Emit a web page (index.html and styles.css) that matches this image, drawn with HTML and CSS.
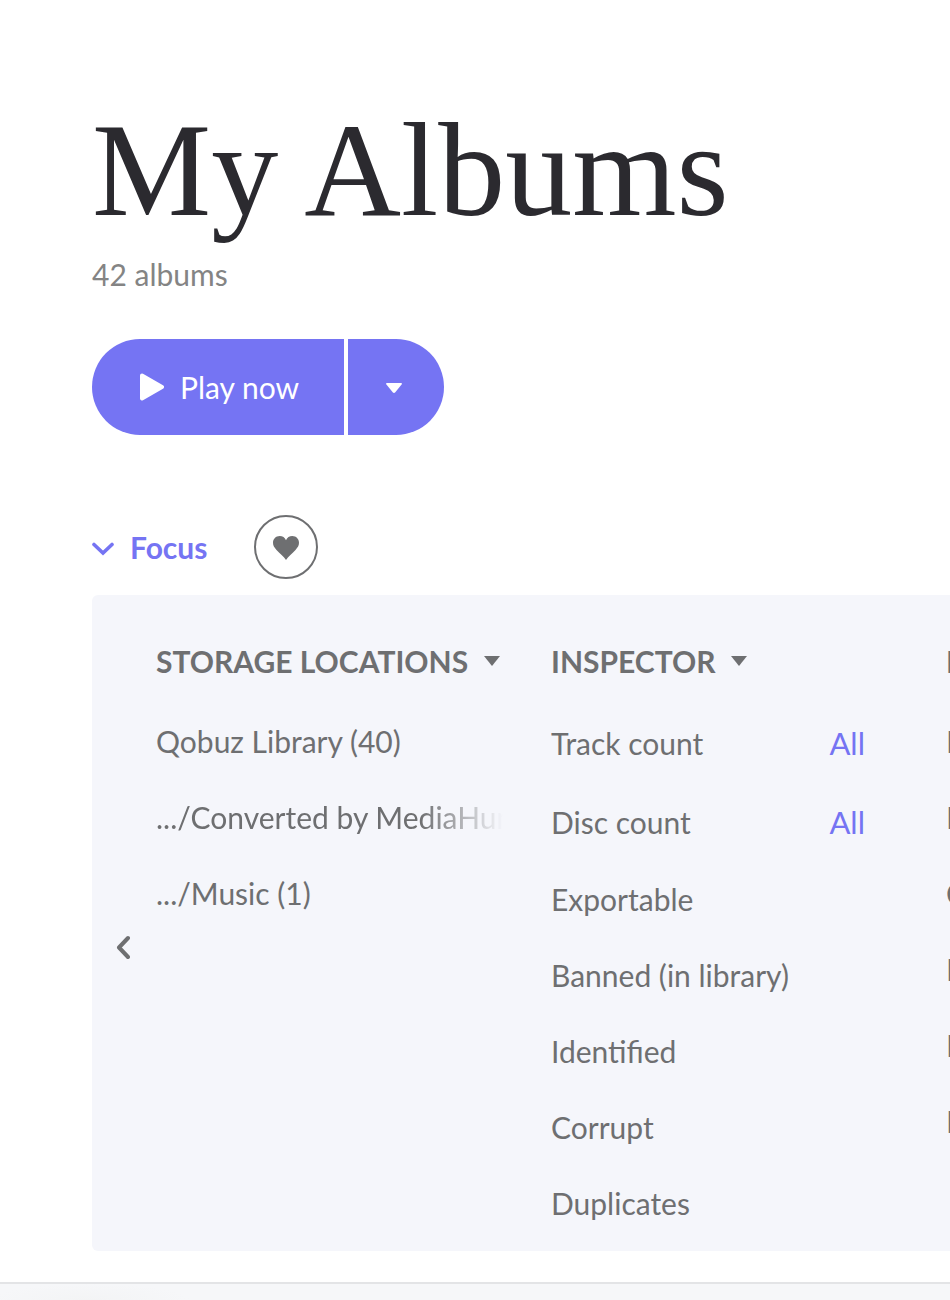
FILE: index.html
```html
<!DOCTYPE html>
<html lang="en">
<head>
  <meta charset="UTF-8">
  <meta name="viewport" content="width=device-width, initial-scale=1">
  <title>My Albums</title>
  <link rel="stylesheet" href="styles.css">
</head>
<body>

<main>
  <h1>My Albums</h1>
  <p class="count">42 albums</p>

  <div class="play-group">
    <button class="play" type="button">
      <svg width="24" height="28" viewBox="0 0 24 28" aria-hidden="true">
        <path d="M2 2.5 L22 14 L2 25.5 Z" fill="currentColor" stroke="currentColor" stroke-width="4" stroke-linejoin="round"/>
      </svg>
      Play now
    </button>
    <button class="play-more" type="button" aria-label="More play options">
      <svg width="16" height="12" viewBox="0 0 16 12" aria-hidden="true">
        <path d="M0.5 2 H15.5 L16 3 L9.3 11.2 Q8 12.6 6.7 11.2 L0 3 Z" fill="currentColor"/>
      </svg>
    </button>
  </div>

  <!-- Focus toggle and favorites filter -->
  <div class="filters">
    <button class="focus" type="button" aria-expanded="true">
      <svg width="22" height="18" viewBox="0 0 22 18" aria-hidden="true">
        <path d="M2 6.5 L11 15 L20 6.5" fill="none" stroke="currentColor" stroke-width="3.6" stroke-linecap="round"/>
      </svg>
      Focus
    </button>
    <button class="favorite" type="button" aria-label="Favorites">
      <svg width="26" height="26" viewBox="0 0 26 26" aria-hidden="true">
        <path d="M13 26 C11 22.8 6.5 19.5 3.5 16 C1.2 13.4 0 11.5 0 8.8 C0 4.8 2.9 2 6.7 2 C9.5 2 12 3.5 13 6.2 C14 3.5 16.5 2 19.3 2 C23.1 2 26 4.8 26 8.8 C26 11.5 24.8 13.4 22.5 16 C19.5 19.5 15 22.8 13 26 Z" fill="currentColor"/>
      </svg>
    </button>
  </div>

  <section class="panel">
    <button class="prev" type="button" aria-label="Previous">
      <svg width="14" height="24" viewBox="0 0 14 24" aria-hidden="true">
        <path d="M12 3 L3 12.5 L12 22" fill="none" stroke="currentColor" stroke-width="4" stroke-linecap="round" stroke-linejoin="round"/>
      </svg>
    </button>

    <div class="column">
      <h2>
        STORAGE LOCATIONS
        <svg width="16" height="10" viewBox="0 0 16 10" aria-hidden="true"><path d="M0 0 H16 L8 10 Z" fill="currentColor"/></svg>
      </h2>
      <ul>
        <li>Qobuz Library (40)</li>
        <li class="fade">.../Converted by MediaHuman</li>
        <li>.../Music (1)</li>
      </ul>
    </div>

    <div class="column">
      <h2>
        INSPECTOR
        <svg width="16" height="10" viewBox="0 0 16 10" aria-hidden="true"><path d="M0 0 H16 L8 10 Z" fill="currentColor"/></svg>
      </h2>
      <ul>
        <li class="range">Track count <button type="button">All</button></li>
        <li class="range">Disc count <button type="button">All</button></li>
        <li>Exportable</li>
        <li>Banned (in library)</li>
        <li>Identified</li>
        <li>Corrupt</li>
        <li>Duplicates</li>
      </ul>
    </div>

    <div class="column">
      <h2>FORMAT</h2>
      <ul>
        <li>FLAC</li>
        <li>MP3</li>
        <li>CD</li>
        <li>MQA</li>
        <li>DSD</li>
        <li>Hi-Res</li>
      </ul>
    </div>
  </section>
</main>

<footer></footer>

</body>
</html>
```
FILE: styles.css
```css
* {
  box-sizing: border-box;
}

body {
  margin: 0;
  min-height: 100vh;
  display: flex;
  flex-direction: column;
  overflow-x: hidden;
  background: #fff;
  color: #6e6f71;
  font-family: Lato, sans-serif;
  font-size: 30px;
  line-height: 36px;
}

button {
  padding: 0;
  border: 0;
  background: none;
  color: inherit;
  font: inherit;
  cursor: pointer;
}

svg {
  display: block;
  flex: none;
}

main {
  padding: 90px 0 31px 92px;
}

h1 {
  margin: 0 0 6px;
  color: #2b2a2f;
  font-family: "Liberation Serif", serif;
  font-size: 134px;
  font-weight: 400;
  line-height: 160px;
}

.count {
  margin: 0;
  color: #848484;
}

.play-group {
  display: flex;
  gap: 4px;
  margin-top: 47px;
}

.play,
.play-more {
  display: flex;
  align-items: center;
  height: 96px;
  background: #7574f3;
  color: #fff;
}

.play {
  gap: 16px;
  padding: 0 45px 0 48px;
  border-radius: 48px 0 0 48px;
}

.play-more {
  width: 96px;
  padding-left: 38px;
  border-radius: 0 48px 48px 0;
}

.filters {
  display: flex;
  align-items: center;
  gap: 47px;
  margin-top: 80px;
}

.focus {
  display: flex;
  align-items: center;
  gap: 16px;
  color: #7574f3;
  font-weight: 700;
}

.favorite {
  display: flex;
  align-items: center;
  justify-content: center;
  width: 64px;
  height: 64px;
  border: 2px solid #6e6f71;
  border-radius: 50%;
}

.panel {
  position: relative;
  display: flex;
  gap: 48px;
  margin-top: 16px;
  padding: 48px 0 30px 64px;
  overflow: hidden;
  border-radius: 6px 0 0 6px;
  background: #f5f6fb;
}

/* arrow lies over the left edge of the panel */
.prev {
  position: absolute;
  top: 50%;
  left: 24px;
  padding: 12px 0;
}

.column {
  flex: none;
  width: 347px;
}

h2 {
  display: flex;
  align-items: center;
  gap: 16px;
  margin: 0 0 44px;
  font-size: 30px;
  font-weight: 700;
  white-space: nowrap;
}

ul {
  display: flex;
  flex-direction: column;
  gap: 40px;
  margin: 0;
  padding: 0;
  list-style: none;
}

li {
  overflow: hidden;
  white-space: nowrap;
}

.fade {
  mask-image: linear-gradient(to right, #000 76%, transparent);
}

.range {
  display: flex;
  align-items: center;
  justify-content: space-between;
  height: 39px;
  padding-right: 33px;
}

.range button {
  color: #7574f3;
  font-size: 31px;
}

footer {
  flex: 1;
  min-height: 18px;
  border-top: 2px solid #e3e4e6;
  background: radial-gradient(ellipse 100px 16px at 90px 100%, #f3f4f5, #f6f7f9);
}
```
